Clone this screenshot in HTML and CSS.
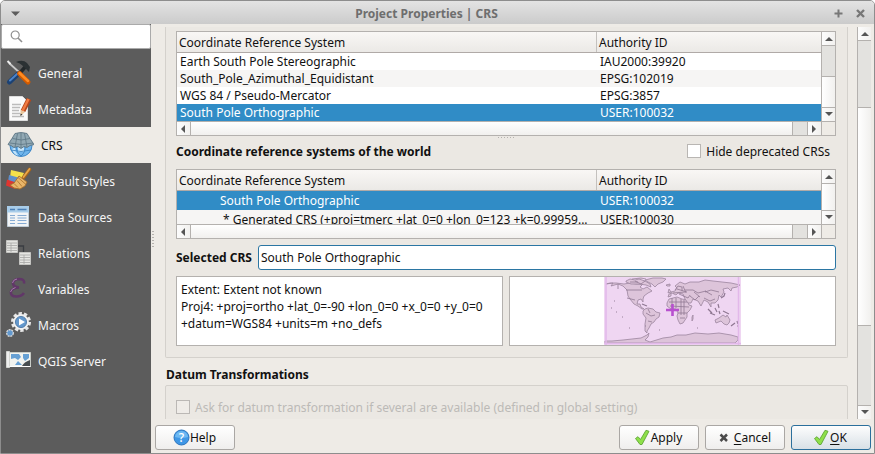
FILE: index.html
```html
<!DOCTYPE html>
<html lang="en">
<head>
<meta charset="utf-8">
<title>Project Properties | CRS</title>
<link rel="stylesheet" href="styles.css">
</head>
<body>
<div class="window">
  <header class="titlebar">
    <svg class="tb-menu" width="9" height="6" viewBox="0 0 9 6"><path d="M0 .5h9L4.500 5z" fill="#5d5d5d"/></svg>
    <span class="title">Project Properties | CRS</span>
    <svg class="tb-max" width="9" height="9" viewBox="0 0 9 9"><path d="M4.500 .5v8M.5 4.500h8" stroke="#777" stroke-width="2"/></svg>
    <svg class="tb-close" width="9" height="9" viewBox="0 0 9 9"><path d="M1 1l7 7M8 1l-7 7" stroke="#777" stroke-width="2.400"/></svg>
  </header>
  <div class="body">
    <nav class="sidebar">
      <div class="search"><svg width="13" height="13" viewBox="0 0 13 13" fill="none" stroke="#8e8e8e"><circle cx="5.200" cy="5" r="4" stroke-width="1.200"/><path d="M8 8l4 4" stroke-width="1.600"/></svg></div>
      <div class="item">
        <svg class="ico" width="28" height="28" viewBox="0 0 28 28"><path d="M3 4l11 10" stroke="#c9c9c9" stroke-width="1.700"/><path d="M1.500 2l3 3" stroke="#eee" stroke-width="2"/><path d="M20 7l-7 8" stroke="#23282a" stroke-width="3.500"/><path d="M10 3q7-3 11 1l3 4-1 5-3-3-3-3q-3-3-7-4z" fill="#2b3133"/><path d="M12 15l-8.500 8" stroke="#1c4274" stroke-width="5" stroke-linecap="round"/><path d="M11 15l-7 6.500" stroke="#4c83c8" stroke-width="2" stroke-linecap="round"/><path d="M13.500 14.500l8.500 8.500" stroke="#d25a00" stroke-width="5" stroke-linecap="round"/><path d="M13.500 14l8.500 8" stroke="#ff8c22" stroke-width="2.500" stroke-linecap="round"/></svg>
        <span>General</span></div>
      <div class="item">
        <svg class="ico" width="28" height="28" viewBox="0 0 28 28"><path d="M3.500 1.500h13l5 5v19h-18z" fill="#fafafa" stroke="#ddd"/><path d="M6 9.500h9M6 12.500h8M6 15.500h7M6 18.500h8M6 21.500h12" stroke="#bcbcbc" stroke-width="1.300"/><path d="M23 4l-6 12" stroke="#b5461c" stroke-width="5"/><path d="M22.500 4l-6 12" stroke="#f17b42" stroke-width="2.500"/><path d="M14.500 15l4.500 2-4.500 4z" fill="#e9c79c"/><path d="M14.500 18.500l0 2.500 2-1.500" fill="#333"/></svg>
        <span>Metadata</span></div>
      <div class="item active">
        <svg class="ico" width="28" height="28" viewBox="0 0 28 28"><circle cx="15" cy="14.500" r="11" fill="#6fb5ec" stroke="#3e86c6"/><path d="M6 18q2 6 6 6.500-3-4-3-8zM12 16h6v5h-6z" fill="#c3e4fb"/><path d="M10.500 14q-1 7 4.500 11 5-4 4-11M5 19q10 3 20 0" fill="none" stroke="#3c83c2" stroke-width=".9"/><path d="M9 2.500q6-2 12 0l3 5 4 6-4 1-3 2-3-1-3 2-3-2-4 1-3-2-3-1 4-6z" fill="#92a9b4" stroke="#5d7684" stroke-width=".9"/><path d="M6.500 7.500q9 3 17.500 0M4 12q11 3 23 0M11.500 2.500L9 16M15 2v15M18.500 2.500L21 16" fill="none" stroke="#5d7684" stroke-width=".8"/></svg>
        <span>CRS</span></div>
      <div class="item">
        <svg class="ico" width="28" height="28" viewBox="0 0 28 28"><path d="M5 3l13 3-3 7-11-3z" fill="#f4e04a"/><path d="M3 8l11 3-3 7-9-3z" fill="#5f8fc9"/><path d="M1 12.500l9 3-1 6.500-9-3.500z" fill="#df3530"/><path d="M23.500 2.500l-6 8" stroke="#a86418" stroke-width="3.600" stroke-linecap="round"/><path d="M23.500 2l-6 8" stroke="#e5a64d" stroke-width="1.800" stroke-linecap="round"/><path d="M13 9l8 6-2 4-5 3-6-1-4-3 4-2z" fill="#e8b569" stroke="#a36c2b" stroke-width=".9"/><path d="M12 10.500l8 7M8 16.500l4 4M11 13.500l5 6" stroke="#b17831" stroke-width=".9"/></svg>
        <span>Default Styles</span></div>
      <div class="item">
        <svg class="ico" width="28" height="28" viewBox="0 0 28 28"><path d="M1.500 3.500h21v20h-21z" fill="#f2f4f6" stroke="#c0ccd6"/><path d="M1 3h22v6.500H1z" fill="#a9cdea"/><path d="M4 6.500h5M11.500 6.500h9" stroke="#4c81b8" stroke-width="1.400"/><path d="M4 12.500h5M11.500 12.500h9M4 15h5M11.500 15h9M4 17.500h5M11.500 17.500h9M4 20.500h5M11.500 20.500h9" stroke="#86abd3" stroke-width="1.100"/></svg>
        <span>Data Sources</span></div>
      <div class="item">
        <svg class="ico" width="28" height="28" viewBox="0 0 28 28"><path d="M12 7h5.500v6" fill="none" stroke="#3a3d42" stroke-width="1.300"/><g id="t"><path d="M.5 1.500h11v12H.5z" fill="#e5e5e2" stroke="#c5c5c2"/><path d="M1 4h10M1 6.500h10M1 9h10M1 11.500h10M5 4v9" stroke="#a6a6a4" stroke-width=".8"/></g><use href="#t" x="13" y="12"/></svg>
        <span>Relations</span></div>
      <div class="item">
        <svg class="ico" width="28" height="28" viewBox="0 0 28 28"><path d="M18 8.500q1-4.500-5-4.500-6 .5-6 4.500.500 3.500 6 4-7 .5-8 4-1 5 5.500 5 5 0 7.500-3.500" fill="none" stroke="#613768" stroke-width="2.600"/><path d="M4.500 17q1-3.500 5-4.500M6.500 8q.5-3.500 4.500-4" fill="none" stroke="#a57cad" stroke-width="1"/></svg>
        <span>Variables</span></div>
      <div class="item">
        <svg class="ico" width="28" height="28" viewBox="0 0 28 28"><circle cx="15" cy="11" r="8.500" fill="none" stroke="#e8e8e8" stroke-width="3" stroke-dasharray="3.300 2.040"/><circle cx="15" cy="11" r="6.700" fill="#6498cc" stroke="#f0f0f0" stroke-width="2.400"/><circle cx="15" cy="11" r="5.600" fill="none" stroke="#3f6f9f" stroke-width=".8"/><path d="M13 7.500l6 3.500-6 3.500z" fill="#fff"/><circle cx="4" cy="22" r="3.300" fill="#6299cf" stroke="#d4d4d4" stroke-width="1.400" stroke-dasharray="2 .75"/></svg>
        <span>Macros</span></div>
      <div class="item">
        <svg class="ico" width="28" height="28" viewBox="0 0 28 28"><path d="M3.500 5.500h21v14h-21z" fill="#f2f3ef" stroke="#c9ccc7"/><path d="M5 7h8l2 3-3 3-3-2-4 1zM17 7h6v4l-4 3-2-3zM9 18l3-4 4 4z" fill="#66a0d4"/><path d="M16 19q2-4 8-6v6z" fill="#474d50"/><path d="M.5 4.500h3v16h-3z" fill="#eee" stroke="#d3d5d1"/><path d="M3.500 19.500h21" stroke="#fff"/></svg>
        <span>QGIS Server</span></div>
    </nav>
    <div class="splitter"></div>
    <main class="main">
      <div class="view">
        <div class="content">
          <section class="group crs">
            <div class="table recent">
              <div class="rows">
                <div class="row head"><span>Coordinate Reference System</span><span>Authority ID</span></div>
                <div class="row"><span>Earth South Pole Stereographic</span><span>IAU2000:39920</span></div>
                <div class="row alt"><span>South_Pole_Azimuthal_Equidistant</span><span>EPSG:102019</span></div>
                <div class="row"><span>WGS 84 / Pseudo-Mercator</span><span>EPSG:3857</span></div>
                <div class="row sel"><span>South Pole Orthographic</span><span>USER:100032</span></div>
              </div>
              <div class="vbar"><i class="btn up"></i><i class="trough before"></i><i class="handle"></i><i class="btn down"></i></div>
              <div class="hbar"><i class="btn left"></i><i class="handle"></i><i class="trough"></i><i class="btn right"></i></div>
              <div class="corner"></div>
            </div>
            <div class="grip"></div>
            <div class="world-line"><b>Coordinate reference systems of the world</b><label><i class="check"></i>Hide deprecated CRSs</label></div>
            <div class="table world">
              <div class="rows">
                <div class="row head"><span>Coordinate Reference System</span><span>Authority ID</span></div>
                <div class="row sel"><span>South Pole Orthographic</span><span>USER:100032</span></div>
                <div class="row alt deep"><span>* Generated CRS (+proj=tmerc +lat_0=0 +lon_0=123 +k=0.99959...</span><span>USER:100030</span></div>
              </div>
              <div class="vbar"><i class="btn up"></i><i class="handle"></i><i class="btn down"></i></div>
              <div class="hbar"><i class="btn left"></i><i class="handle"></i><i class="trough"></i><i class="btn right"></i></div>
              <div class="corner"></div>
            </div>
            <div class="selected"><b>Selected CRS</b><div class="field">South Pole Orthographic</div></div>
            <div class="details">
              <div class="panel info"><span>Extent: Extent not known</span><span>Proj4: +proj=ortho +lat_0=-90 +lon_0=0 +x_0=0 +y_0=0</span><span>+datum=WGS84 +units=m +no_defs</span></div>
              <div class="panel map">
                <svg width="137" height="68" viewBox="0 0 137 68">
                  <path d="M0 0h137v68H0z" fill="#efd6f2"/>
                  <g fill="#ddc4da" stroke="#9c859e" stroke-width=".8" stroke-linejoin="round">
                    <path d="M2 7l4-1 6 0 8 1 6-1 6 1 7 0-3 3 3 2 4-2 5 4-4 2-4 3-1 3 0 3-2-3-3 1-1 4 3 0 1 3 3 2-2 0-4-3-4-2-4-5-2-3-1-6-4-4-5-2-7 2 2-3z"/>
                    <path d="M22 4l4-2 5 1 4-1 6 2 5 3 1 3-5-2-7-1-8 0-5-2zM41 3l8-2h9l4 1-3 3-5 2-3 3-3-3-4-2zM28 2l9-1 5 1"/>
                    <path d="M41 32l3-1 5 1 3 3 4 1-1 4-3 2-2 3-3 2-2 4-2 3 0 2-2-2 0-7 1-6-3-4 0-3z"/>
                    <path d="M63 26l2-4 4-1 4-1 5 2 5 1 2 5 3 1-2 4-3 3 0 4-4 6-3 1-2-4-1-4 1-3-2-4-5 0-4-3z"/>
                    <path d="M67 19l0-4 4-1 2-3-2-2 5-4 5 2 5-2 9 0 6-2 8 1 9 1 9 1 9 2-3 2-5 1-1 3-3-3-5 1 1 3-3 5-2-2-1 5-3 3-4 0 0 4-3-5-4-2-3 6-3-5-5-2-2 4-3 0-3-4-2-5-5-1-2 2-4-2-3 1-1 3z"/>
                    <path d="M111 43l4-2 4-3 3 2 1-2 3 5-1 3-2 2-3-1-3-3-5 2z"/>
                    <path d="M88 40l1-2v4l-1 2zM65 12l2 3-3 1zM62 8l4-1 0 2-3 0z"/>
                    <path d="M1 64l7 0 11-1 9-1 9-1 6-3 2-2-1 4-3 3 5 2 13-4 8-1 6-2 9 0 9-2 13 1 11-1 12 2 7 2 0 3-3 3H1z"/>
                  </g>
                  <path d="M104 32l4 4M106 36l5 2M111 31l2 4M115 34l1 3M119 34l6 3M114 27l1 4M117 21l3-2 1-3M127 49l4-3M133 44l1 3M38 27l5 2" fill="none" stroke="#8f7892" stroke-width="1.200"/>
                  <path d="M14 7v5M22 13h16M23 21l8 2M31 4l6 3 4-3M26 5l8 0M42 36l5 3 4-1M44 44l4 1M44 32l2 4M65 25h18M68 21v10M72 21v10M77 22v16M66 29l19 1M80 23v15M74 36h9M76 41h5M71 13l3-4 4 1 0 4M69 16l12-1M73 12l10 3M75 17l9 4 2-3M79 9l3 7M81 13h8l5 3 8-2M86 19l5 4 4-4M90 15l6 5M101 15l6-2 8 2M100 21l6 3 5-2M101 14l7 4" fill="none" stroke="#907993" stroke-width=".8"/>
                  <path d="M10 24h1M7 31h1M12 35h1M25 51h1M41 49h1M93 51h1M133 49h1M55 53h1M18 40h1M63 33h1" stroke="#97809a"/>
                  <path d="M2 0v68M134.500 0v68M0 66.500h137" stroke="#e2b8ea" stroke-width="1.500"/>
                  <path d="M68.500 27v12M62 33h13" stroke="#b850cf" stroke-width="2.600"/>
                </svg>
              </div>
            </div>
          </section>
          <h2>Datum Transformations</h2>
          <section class="group datum"><i class="check"></i><span>Ask for datum transformation if several are available (defined in global setting)</span></section>
        </div>
        <div class="vbar page"><i class="btn up"></i><i class="trough before"></i><i class="handle"></i><i class="trough after"></i><i class="btn down"></i></div>
      </div>
      <footer class="buttons">
        <button class="help"><svg width="17" height="17" viewBox="0 0 17 17"><circle cx="8.500" cy="8.500" r="7.500" fill="#3f97e6" stroke="#2c74bd"/><path d="M2 8a6.500 6 0 0 1 13 0q-6.500 2-13 0" fill="#6db8f2"/><text x="8.500" y="12.800" text-anchor="middle" class="q">?</text></svg>Help</button>
        <button><svg width="16" height="17" viewBox="0 0 16 17"><path class="tick" d="M.5 9.500L3 7.700l2.500 2.800L11 1.300l3 1L7 15.500H5z"/></svg>Apply</button>
        <button class="cancel"><svg width="10" height="10" viewBox="0 0 10 10"><path d="M1.500 1.500l6.500 6.500M8 1.500L1.500 8" stroke="#4b4b4b" stroke-width="2.500"/></svg><span><u>C</u>ancel</span></button>
        <button class="ok"><svg width="16" height="17" viewBox="0 0 16 17"><path class="tick" d="M.5 9.500L3 7.700l2.500 2.800L11 1.300l3 1L7 15.500H5z"/></svg><span><u>O</u>K</span></button>
      </footer>
    </main>
  </div>
</div>
</body>
</html>
```
FILE: styles.css
```css
* { box-sizing: border-box; }
body { margin: 0; background: #fff; font: 12px/17px "Noto Sans", sans-serif; color: #111; overflow: hidden; }
svg { display: block; flex: none; }
i { display: block; flex: none; }
.window { width: 875px; height: 454px; border: 1px solid #8d8d8d; border-radius: 5px 5px 0 0; background: #eeebe6; overflow: hidden; display: flex; flex-direction: column; }
.titlebar { height: 23px; flex: none; display: flex; align-items: center; padding: 2px 9px 0 10px; background: linear-gradient(#e3e3e3, #cbcbcb); }
.title { flex: 1; text-align: center; font-weight: 700; color: #6e6e6e; padding-right: 1px; }
.tb-max { margin-right: 13px; }
.body { flex: 1; display: flex; min-height: 0; }
.sidebar { width: 150px; background: #5c5c5c; flex: none; }
.search { height: 25px; margin-bottom: 6px; padding: 6px 8px; background: #fff; border: 1px solid #aaa; border-radius: 2px; }
.search svg { margin-top: -1px; }
.item { height: 36px; display: flex; align-items: center; gap: 4px; padding-left: 5px; color: #f5f5f5; }
.item.active { background: #eeebe6; color: #111; gap: 7px; }
.splitter { width: 4px; flex: none; align-self: center; height: 18px; background: radial-gradient(circle, #b5b2ae 0.6px, transparent 0.9px) 0 0 / 4px 3px; }
.main { flex: 1; display: flex; flex-direction: column; min-width: 0; }
.view { height: 392px; margin-top: 3px; display: flex; overflow: hidden; padding: 0 3px 0 10px; flex: none; }
.content { width: 683px; flex: none; }
.group { border: 1px solid #d4d1cc; background: #ebe8e3; border-radius: 2px; }
.crs { height: 331px; border-top: 0; border-radius: 0 0 2px 2px; padding: 4px 11px 0 10px; }
.table { display: grid; grid-template-columns: 644px 14px; grid-template-rows: 1fr 14px; border: 1px solid #b4b1ae; }
.recent { height: 105px; }
.world { height: 70px; }
.rows { overflow: hidden; min-height: 0; background: #fff; }
.row { display: flex; height: 17px; white-space: nowrap; }
.row span { width: 420px; padding-left: 3px; flex: none; }
.row span + span { width: auto; flex: 1; }
.head { height: 21px; line-height: 21px; background: linear-gradient(#f9f7f5, #ebe9e6); border-bottom: 1px solid #b0aaa7; }
.head span { width: 420px; padding-left: 2px; border-right: 1px solid #c4c1be; }
.head span + span { border: 0; }
.alt { background: #f6f5f4; }
.sel { background: #308cc6; color: #fff; }
.world .sel { height: 19px; line-height: 19px; }
.world .sel span:first-child { padding-left: 43px; }
.world .deep { height: 19px; line-height: 19px; }
.world .deep span:first-child { padding-left: 46px; }
.vbar { display: flex; flex-direction: column; border-left: 1px solid #b4b1ae; min-height: 0; }
.handle { flex: 1; background: linear-gradient(90deg, #fff, #f1f0ee); }
.trough { background: #e3e2df; }
.vbar .trough.before { height: 31px; border-bottom: 1px solid #b4b1ae; }
.btn { width: 13px; height: 14px; display: flex; align-items: center; justify-content: center; background: linear-gradient(90deg, #fcfcfc, #f2f1ef); }
.btn::before { content: ""; border: 4px solid transparent; }
.up { border-bottom: 1px solid #b4b1ae; }
.up::before { border-top: 0; border-bottom-color: #555; }
.down { border-top: 1px solid #b4b1ae; padding-bottom: 2px; }
.down::before { border-bottom: 0; border-top-color: #555; }
.hbar { display: flex; border-top: 1px solid #b4b1ae; }
.hbar .handle { background: linear-gradient(#fff, #f1f0ee); }
.hbar .trough { width: 15px; border-left: 1px solid #b4b1ae; }
.left, .right { width: 14px; height: 13px; }
.left { border-right: 1px solid #b4b1ae; padding-right: 2px; }
.left::before { border-left: 0; border-right-color: #555; }
.right { border-left: 1px solid #b4b1ae; padding-right: 2px; }
.right::before { border-right: 0; border-left-color: #555; }
.corner { border-top: 1px solid #b4b1ae; border-left: 1px solid #b4b1ae; background: #eeebe6; }
.grip { height: 2px; width: 17px; margin: 0 auto; background: linear-gradient(90deg, #b5b2ae 1px, transparent 1px) 0 1px / 3px 1px repeat-x; }
.world-line { height: 31px; display: flex; justify-content: space-between; align-items: center; padding: 0 6px 5px 0; }
.world-line label { display: flex; gap: 5px; align-items: center; }
.check { width: 14px; height: 14px; border: 1px solid #b9b6b3; background: #fff; }
.selected { height: 25px; margin-top: 6px; display: flex; align-items: center; justify-content: space-between; }
.field { width: 578px; height: 25px; border: 1px solid #2b76a3; border-radius: 3px; background: #fff; padding-left: 2px; line-height: 23px; }
.details { display: flex; gap: 6px; margin-top: 6px; }
.panel { width: 327px; height: 70px; background: #fff; border: 1px solid #b4b1ae; }
.info { display: flex; flex-direction: column; padding: 4px; white-space: nowrap; }
.map { padding-left: 94px; }
h2 { margin: 0; height: 27px; padding: 8px 0 0 1px; font-size: 12px; line-height: 17px; }
.datum { height: 60px; padding: 14px 10px; display: flex; gap: 5px; align-items: flex-start; color: #bcbab7; white-space: nowrap; }
.datum .check { background: #efece8; border-color: #bbb8b5; }
.datum span { margin-top: -1px; }
.page { width: 14px; margin-left: 9px; height: 392px; }
.page .trough.before { height: 67px; }
.page .trough.after { height: 80px; border-top: 1px solid #b4b1ae; }
.buttons { display: flex; gap: 6px; margin-top: 6px; padding-right: 3px; }
button { width: 80px; height: 25px; padding: 0 1px 0 0; border: 1px solid #aaa7a4; border-radius: 3px; background: linear-gradient(#fff, #efeeed); font: 12px/17px "Noto Sans", sans-serif; color: #111; display: flex; align-items: center; justify-content: center; gap: 0; }
.help { margin-right: auto; }
.cancel { gap: 5px; padding-right: 0; }
.ok { border-color: #2b6f9c; background: linear-gradient(#fdfdfd, #d8e0e6); }
u { text-underline-offset: 2px; }
.q { font: 500 12px "Noto Sans", sans-serif; fill: #fff; }
.tick { fill: #8ee04a; stroke: #5fa637; stroke-width: 0.9; }
```
